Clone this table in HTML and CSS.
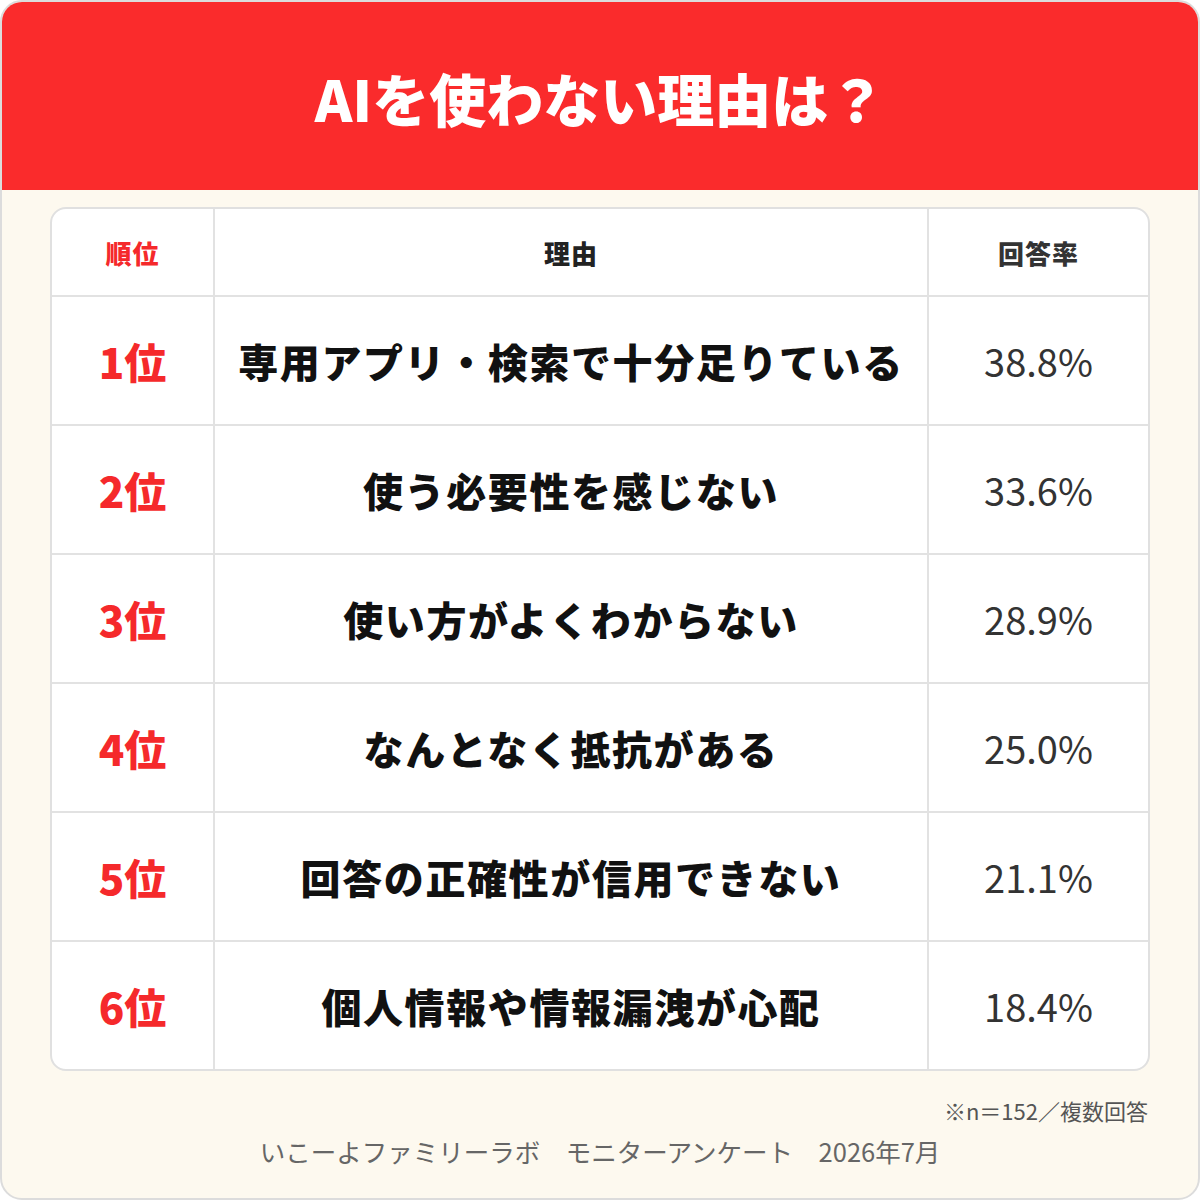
FILE: index.html
```html
<!DOCTYPE html>
<html lang="ja">
<head>
<meta charset="utf-8">
<title>AIを使わない理由は？</title>
<link rel="stylesheet" href="styles.css">
</head>
<body>
<div class="card">
  <header class="hero">
    <h1 class="title">AIを使わない理由は？</h1>
  </header>
  <div class="table">
    <div class="cell head head-rank">順位</div>
    <div class="cell head">理由</div>
    <div class="cell head head-rate">回答率</div>

    <div class="cell rank">1位</div>
    <div class="cell reason">専用アプリ・検索で十分足りている</div>
    <div class="cell pct">38.8%</div>

    <div class="cell rank">2位</div>
    <div class="cell reason">使う必要性を感じない</div>
    <div class="cell pct">33.6%</div>

    <div class="cell rank">3位</div>
    <div class="cell reason">使い方がよくわからない</div>
    <div class="cell pct">28.9%</div>

    <div class="cell rank">4位</div>
    <div class="cell reason">なんとなく抵抗がある</div>
    <div class="cell pct">25.0%</div>

    <div class="cell rank">5位</div>
    <div class="cell reason">回答の正確性が信用できない</div>
    <div class="cell pct">21.1%</div>

    <div class="cell rank last">6位</div>
    <div class="cell reason last">個人情報や情報漏洩が心配</div>
    <div class="cell pct last">18.4%</div>
  </div>
  <p class="note">※n＝152／複数回答</p>
  <p class="credit">いこーよファミリーラボ　モニターアンケート　2026年7月</p>
</div>
</body>
</html>
```

FILE: styles.css
```css
* { box-sizing: border-box; }
html, body {
  margin: 0;
  padding: 0;
  background: #ffffff;
}
body {
  font-family: "Noto Sans CJK JP", "Noto Sans", sans-serif;
}
.card {
  width: 1200px;
  height: 1200px;
  border: 2px solid #dcdcdc;
  border-radius: 22px;
  overflow: hidden;
  background: #fdf9ef;
  display: flex;
  flex-direction: column;
}
.hero {
  background: #fa2b2c;
  height: 188px;
  display: flex;
  align-items: center;
  justify-content: center;
  flex-shrink: 0;
}
.title {
  margin: 0;
  color: #ffffff;
  font-size: 57px;
  font-weight: 900;
  letter-spacing: 0;
  line-height: 1;
  padding-top: 2px;
}
.table {
  margin: 17px 48px 0 48px;
  background: #ffffff;
  border: 2px solid #e0e0e0;
  border-radius: 16px;
  display: grid;
  grid-template-columns: 163px 714px 1fr;
  grid-template-rows: 88px repeat(5, 129px) 127px;
  overflow: hidden;
}
.cell {
  display: flex;
  align-items: center;
  justify-content: center;
  border-bottom: 2px solid #e2e2e2;
  border-right: 2px solid #e2e2e2;
}
.cell.pct, .cell.head-rate { border-right: none; }
.cell.last { border-bottom: none; }
.head {
  font-size: 26px;
  font-weight: 900;
  color: #222222;
  letter-spacing: 1px;
}
.head-rank { color: #f5292b; }
.head-rate { color: #333333; }
.rank {
  color: #f5292b;
  font-size: 42px;
  font-weight: 900;
}
.reason {
  color: #111111;
  font-size: 40px;
  font-weight: 900;
  letter-spacing: 1.6px;
}
.pct {
  color: #333333;
  font-size: 38px;
  font-weight: 400;
}
.note {
  margin: 24px 50px 0 0;
  text-align: right;
  color: #555555;
  font-size: 22px;
  line-height: 30px;
}
.credit {
  margin: 10px 0 0 0;
  text-align: center;
  color: #666666;
  font-size: 25.5px;
  line-height: 32px;
}
```
